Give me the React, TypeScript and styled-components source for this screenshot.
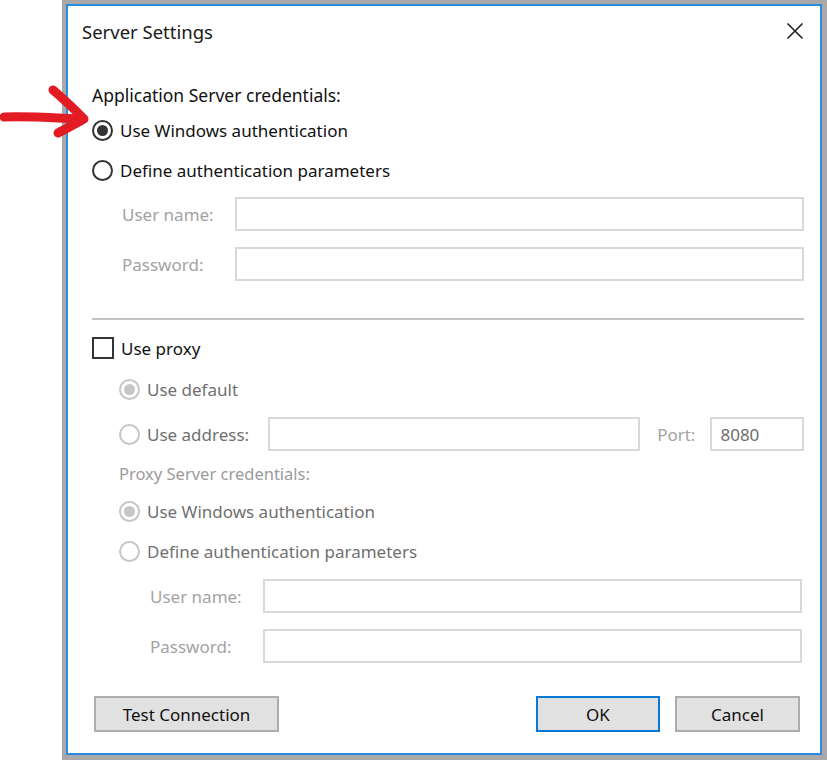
import React from 'react';
import styled, { createGlobalStyle } from 'styled-components';

const GlobalStyle = createGlobalStyle`
    html, body {
        margin: 0;
        padding: 0;
        background: #ffffff;
    }
    body {
        font-family: "Noto Sans", "Open Sans", sans-serif;
    }
`;

const Stage = styled.div`
    position: relative;
    width: 827px;
    height: 760px;
    overflow: hidden;
`;

const Arrow = styled.svg`
    position: absolute;
    left: 0;
    top: 80px;
    width: 96px;
    height: 64px;
    pointer-events: none;
`;

const Frame = styled.div`
    box-sizing: border-box;
    margin-left: 62px;
    width: 765px;
    height: 760px;
    padding: 4px 5px 5px 4px;
    background: #a9a9a9;
`;

const Dialog = styled.div`
    box-sizing: border-box;
    height: 100%;
    border: 2px solid #2b8be0;
    background: #ffffff;
    display: flex;
    flex-direction: column;
    color: #111;
    font-size: 17px;
`;

const TitleBar = styled.div`
    height: 50px;
    display: flex;
    align-items: center;
    justify-content: space-between;
    padding: 0 16px 0 14px;
`;

const Title = styled.span`
    font-size: 18.5px;
    color: #1a1a1a;
`;

const CloseIcon = styled.svg`
    width: 18px;
    height: 18px;
`;

const Content = styled.div`
    display: flex;
    flex-direction: column;
    padding: 0 16px 0 24px;
`;

const Row = styled.div<{ $mt: number; $h?: number; $indent?: number; $right?: number }>`
    display: flex;
    align-items: center;
    margin-top: ${p => p.$mt}px;
    height: ${p => p.$h ?? 30}px;
    padding-left: ${p => p.$indent ?? 0}px;
    padding-right: ${p => p.$right ?? 0}px;
`;

const GroupLabel = styled.span<{ $disabled?: boolean }>`
    font-size: ${p => (p.$disabled ? '16.5px' : '17.5px')};
    color: ${p => (p.$disabled ? '#9b9b9b' : '#111')};
`;

const RadioCircle = styled.span<{ $checked?: boolean; $disabled?: boolean }>`
    box-sizing: border-box;
    width: 21px;
    height: 21px;
    border-radius: 50%;
    border: 2px solid ${p => (p.$disabled ? '#c6c6c6' : '#333')};
    display: flex;
    align-items: center;
    justify-content: center;
    flex-shrink: 0;

    &::after {
        content: '';
        display: ${p => (p.$checked ? 'block' : 'none')};
        width: 11px;
        height: 11px;
        border-radius: 50%;
        background: ${p => (p.$disabled ? '#c6c6c6' : '#333')};
    }
`;

const OptionText = styled.span<{ $disabled?: boolean }>`
    margin-left: 7px;
    color: ${p => (p.$disabled ? '#707070' : '#111')};
    white-space: nowrap;
`;

const CheckBox = styled.span`
    box-sizing: border-box;
    width: 22px;
    height: 22px;
    border: 2px solid #333;
    flex-shrink: 0;
`;

const FieldLabel = styled.span<{ $w: number }>`
    width: ${p => p.$w}px;
    flex-shrink: 0;
    color: #a3a3a3;
`;

const Input = styled.div<{ $w?: number; $ml?: number }>`
    box-sizing: border-box;
    height: 34px;
    border: 2px solid #d9d9d9;
    background: #fff;
    display: flex;
    align-items: center;
    padding-left: 8px;
    margin-left: ${p => p.$ml ?? 0}px;
    color: #6d6d6d;
    ${p => (p.$w ? `width: ${p.$w}px; flex-shrink: 0;` : 'flex: 1;')}
`;

const PortLabel = styled.span`
    margin: 0 15px 0 17px;
    color: #a3a3a3;
`;

const Separator = styled.hr`
    margin: 37px 0 0;
    border: none;
    height: 2px;
    background: #c3c3c3;
`;

const ButtonBar = styled.div`
    display: flex;
    align-items: center;
    gap: 15px;
    margin-top: 33px;
    padding: 0 4px 0 2px;
`;

const Button = styled.button<{ $w: number; $primary?: boolean }>`
    box-sizing: border-box;
    width: ${p => p.$w}px;
    height: 36px;
    font-family: inherit;
    font-size: 17px;
    color: #111;
    background: #e1e1e1;
    border: 2px solid ${p => (p.$primary ? '#0a78d7' : '#adadad')};
    padding: 0;
`;

const Spacer = styled.div`
    flex: 1;
`;

type OptionProps = { label: string; checked?: boolean; disabled?: boolean };

const Option = ({ label, checked, disabled }: OptionProps) => (
    <>
        <RadioCircle $checked={checked} $disabled={disabled} />
        <OptionText $disabled={disabled}>{label}</OptionText>
    </>
);

const App = () => {
    return (
        <Stage>
            <GlobalStyle />
            <Frame>
                <Dialog>
                    <TitleBar>
                        <Title>Server Settings</Title>
                        <CloseIcon viewBox="0 0 18 18">
                            <path d="M1.5 1.5 L16.5 16.5 M16.5 1.5 L1.5 16.5" stroke="#222" strokeWidth="1.6" fill="none" />
                        </CloseIcon>
                    </TitleBar>
                    <Content>
                        <Row $mt={24}>
                            <GroupLabel>Application Server credentials:</GroupLabel>
                        </Row>
                        <Row $mt={5}>
                            <Option label="Use Windows authentication" checked />
                        </Row>
                        <Row $mt={10}>
                            <Option label="Define authentication parameters" />
                        </Row>
                        <Row $mt={12} $h={34} $indent={30}>
                            <FieldLabel $w={113}>User name:</FieldLabel>
                            <Input />
                        </Row>
                        <Row $mt={16} $h={34} $indent={30}>
                            <FieldLabel $w={113}>Password:</FieldLabel>
                            <Input />
                        </Row>

                        <Separator />

                        <Row $mt={13}>
                            <CheckBox />
                            <OptionText>Use proxy</OptionText>
                        </Row>
                        <Row $mt={11} $indent={27}>
                            <Option label="Use default" checked disabled />
                        </Row>
                        <Row $mt={13} $h={34} $indent={27}>
                            <RadioCircle $disabled />
                            <OptionText $disabled>Use address:</OptionText>
                            <Input $w={372} $ml={19} />
                            <PortLabel>Port:</PortLabel>
                            <Input>8080</Input>
                        </Row>
                        <Row $mt={7} $indent={27}>
                            <GroupLabel $disabled>Proxy Server credentials:</GroupLabel>
                        </Row>
                        <Row $mt={8} $indent={27}>
                            <Option label="Use Windows authentication" checked disabled />
                        </Row>
                        <Row $mt={10} $indent={27}>
                            <Option label="Define authentication parameters" disabled />
                        </Row>
                        <Row $mt={13} $h={34} $indent={58} $right={2}>
                            <FieldLabel $w={113}>User name:</FieldLabel>
                            <Input />
                        </Row>
                        <Row $mt={16} $h={34} $indent={58} $right={2}>
                            <FieldLabel $w={113}>Password:</FieldLabel>
                            <Input />
                        </Row>

                        <ButtonBar>
                            <Button $w={185}>Test Connection</Button>
                            <Spacer />
                            <Button $w={124} $primary>OK</Button>
                            <Button $w={125}>Cancel</Button>
                        </ButtonBar>
                    </Content>
                </Dialog>
            </Frame>
            <Arrow viewBox="0 80 96 64">
                <path d="M4 117 C28 116 56 118 82 119" stroke="#e31b23" strokeWidth="9" strokeLinecap="round" fill="none" />
                <path d="M53 90 C65 100 75 110 84 119 C76 124 67 128 58 133" stroke="#e31b23" strokeWidth="9" strokeLinecap="round" strokeLinejoin="round" fill="none" />
            </Arrow>
        </Stage>
    );
};

export default App;
